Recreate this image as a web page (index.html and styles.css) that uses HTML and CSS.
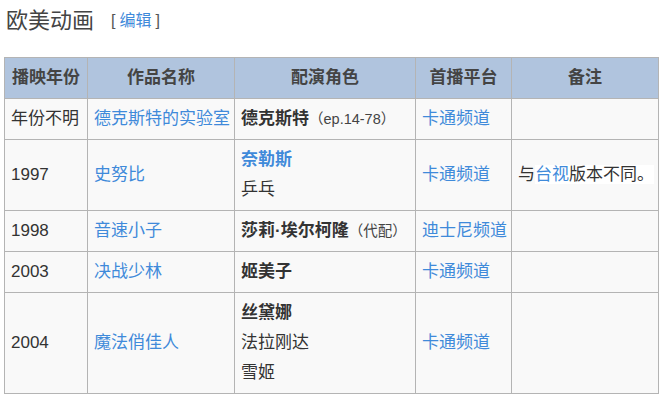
FILE: index.html
```html
<!DOCTYPE html>
<html lang="zh-CN">
<head>
<meta charset="utf-8">
<link rel="stylesheet" href="styles.css">
</head>
<body>
<div class="page">
  <h3 class="section-title"><span class="title-text">欧美动画</span><span class="edit"><span class="bracket">[</span><a class="link" href="#">编辑</a><span class="bracket">]</span></span></h3>
  <table class="wikitable">
    <colgroup>
      <col class="c1"><col class="c2"><col class="c3"><col class="c4"><col class="c5">
    </colgroup>
    <thead>
      <tr><th>播映年份</th><th>作品名称</th><th>配演角色</th><th>首播平台</th><th>备注</th></tr>
    </thead>
    <tbody>
      <tr>
        <td>年份不明</td>
        <td><a class="link" href="#">德克斯特的实验室</a></td>
        <td><b>德克斯特</b><small>（ep.14-78）</small></td>
        <td><a class="link" href="#">卡通频道</a></td>
        <td></td>
      </tr>
      <tr>
        <td>1997</td>
        <td><a class="link" href="#">史努比</a></td>
        <td><a class="link strong" href="#">奈勒斯</a><br>乒乓</td>
        <td><a class="link" href="#">卡通频道</a></td>
        <td>与<span class="white"><a class="link" href="#">台视</a>版本不同。</span></td>
      </tr>
      <tr>
        <td>1998</td>
        <td><a class="link" href="#">音速小子</a></td>
        <td><b>莎莉·埃尔柯隆</b><small>（代配）</small></td>
        <td><a class="link" href="#">迪士尼频道</a></td>
        <td></td>
      </tr>
      <tr>
        <td>2003</td>
        <td><a class="link" href="#">决战少林</a></td>
        <td><b>姬美子</b></td>
        <td><a class="link" href="#">卡通频道</a></td>
        <td></td>
      </tr>
      <tr>
        <td>2004</td>
        <td><a class="link" href="#">魔法俏佳人</a></td>
        <td><b>丝黛娜</b><br>法拉刚达<br>雪姬</td>
        <td><a class="link" href="#">卡通频道</a></td>
        <td></td>
      </tr>
    </tbody>
  </table>
</div>
</body>
</html>
```

FILE: styles.css
```css
html, body {
  margin: 0;
  padding: 0;
  background: #ffffff;
}
body {
  font-family: "Liberation Sans", "Noto Sans CJK SC", sans-serif;
  color: #333333;
}
.page {
  padding: 6px 0 0 4px;
}
.section-title {
  margin: 0 0 21px 0;
  padding-left: 2px;
  font-weight: normal;
  font-size: 22px;
  line-height: 30px;
  color: #444444;
  display: flex;
  align-items: center;
}
.edit {
  font-size: 16px;
  margin-left: 17px;
  display: inline-flex;
  align-items: center;
  gap: 4px;
}
.bracket {
  color: #555555;
}
.link {
  color: #3f8ada;
  text-decoration: none;
}
.link.strong {
  font-weight: bold;
}
.wikitable {
  border-collapse: collapse;
  table-layout: fixed;
  width: 655px;
  background: #f9f9f9;
  border: 1px solid #b4b4b4;
  font-size: 17px;
  line-height: 30px;
}
.c1 { width: 83px; }
.c2 { width: 147px; }
.c3 { width: 181px; }
.c4 { width: 96px; }
.c5 { width: 147px; }
.wikitable th,
.wikitable td {
  border: 1px solid #b4b4b4;
  padding: 5px 6px;
  vertical-align: middle;
  white-space: nowrap;
}
.wikitable th {
  background: #b0c4de;
  font-weight: bold;
  color: #444444;
  text-align: center;
}
.wikitable td {
  text-align: left;
}
.wikitable b {
  font-weight: bold;
  color: #333333;
}
.wikitable small {
  font-size: 14.5px;
  color: #444444;
}
.white {
  background: #ffffff;
}
```
